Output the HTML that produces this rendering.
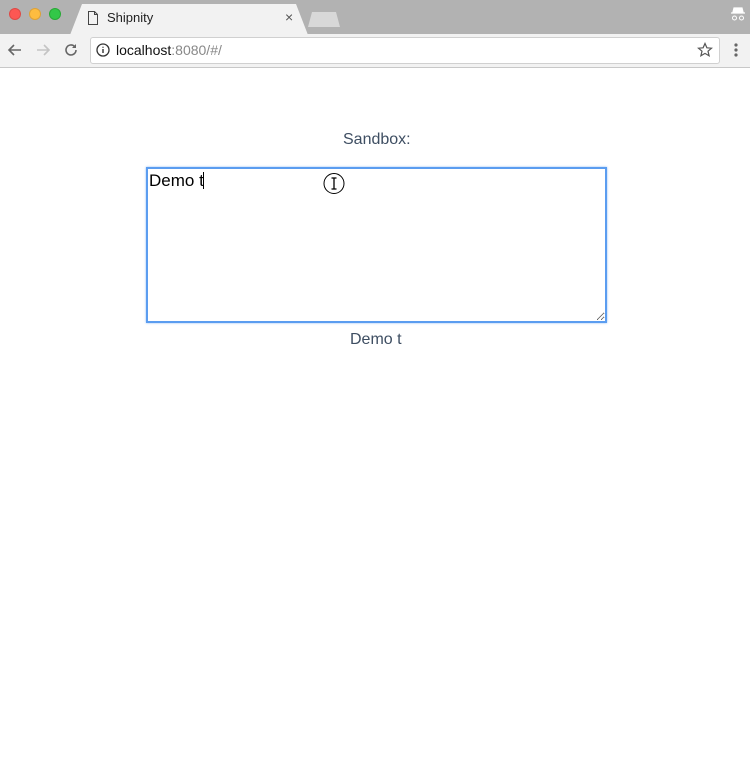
<!DOCTYPE html>
<html><head><meta charset="utf-8"><style>
*{margin:0;padding:0;box-sizing:border-box}
body{width:750px;height:771px;background:#fff;font-family:"Liberation Sans",sans-serif;position:relative;overflow:hidden}
.top{position:absolute;left:0;top:0;width:750px;height:35px;background:#b2b2b2}
.dot{position:absolute;top:8px;width:12px;height:12px;border-radius:50%}
.tab{position:absolute;left:70px;top:4px;width:238px;height:31px;background:#f2f2f2;clip-path:polygon(12px 0,226px 0,238px 31px,0 31px);}
.tab2{position:absolute;left:308px;top:12px;width:32px;height:15px;background:#d8d8d8;clip-path:polygon(4px 0,28px 0,32px 15px,0 15px)}
.bar{position:absolute;left:0;top:34px;width:750px;height:34px;background:#f2f2f2;border-bottom:1px solid #c8c8c8}
.omni{position:absolute;left:90px;top:37px;width:630px;height:27px;background:#fff;border:1px solid #d0d0d0;border-radius:3px}
.t{position:absolute;white-space:nowrap}
textarea{position:absolute;left:146px;top:167px;width:461px;height:156px;border:2px solid #5b9df0;box-shadow:0 0 2px #8ab8f5;font-family:"Liberation Sans",sans-serif;font-size:17px;padding:2px 1px;resize:both;outline:none;caret-color:transparent}
</style></head><body>
<div class="top"></div>
<div class="dot" style="left:9px;background:#fc5753;border:1px solid #de4a46"></div>
<div class="dot" style="left:29px;background:#fdbc40;border:1px solid #dea236"></div>
<div class="dot" style="left:49px;background:#33c748;border:1px solid #27aa35"></div>
<div class="tab"></div>
<div class="tab2"></div>
<svg class="t" style="left:87px;top:11px" width="12" height="14" viewBox="0 0 12 14"><path d="M1.5 .5h6l3 3v10h-9z M7.5 .5v3h3" fill="none" stroke="#444"/></svg>
<div class="t" style="left:107px;top:10px;font-size:13px;color:#222">Shipnity</div>
<div class="t" style="left:285px;top:9px;font-size:14px;color:#555">×</div>
<svg class="t" style="left:729px;top:5px" width="18" height="18" viewBox="0 0 18 18"><path d="M5 3h8l1 4H4z M2 8h14" stroke="#fff" fill="#fff" stroke-width="1.2"/><circle cx="5.5" cy="13" r="2" fill="none" stroke="#fff"/><circle cx="12.5" cy="13" r="2" fill="none" stroke="#fff"/></svg>
<div class="bar"></div>
<svg class="t" style="left:6px;top:42px" width="18" height="16" viewBox="0 0 18 16"><path d="M15 8H3M8 3L3 8l5 5" fill="none" stroke="#666" stroke-width="1.6"/></svg>
<svg class="t" style="left:34px;top:42px" width="18" height="16" viewBox="0 0 18 16"><path d="M3 8h12M10 3l5 5-5 5" fill="none" stroke="#c4c4c4" stroke-width="1.6"/></svg>
<svg class="t" style="left:62px;top:41px" width="18" height="18" viewBox="0 0 18 18"><path d="M14 9a5 5 0 1 1-1.5-3.6" fill="none" stroke="#666" stroke-width="1.6"/><path d="M14 3v4h-4z" fill="#666"/></svg>
<div class="omni"></div>
<svg class="t" style="left:96px;top:43px" width="14" height="14" viewBox="0 0 14 14"><circle cx="7" cy="7" r="6" fill="none" stroke="#333" stroke-width="1.3"/><path d="M7 6v4M7 3.8v1" stroke="#333" stroke-width="1.4"/></svg>
<div class="t" style="left:116px;top:42px;font-size:14px;color:#111">localhost<span style="color:#888">:8080/#/</span></div>
<svg class="t" style="left:697px;top:42px" width="16" height="16" viewBox="0 0 16 16"><path d="M8 1.5l1.9 4.3 4.6.4-3.5 3 1.1 4.6L8 11.4l-4.1 2.4 1.1-4.6-3.5-3 4.6-.4z" fill="none" stroke="#555" stroke-width="1.2"/></svg>
<svg class="t" style="left:734px;top:42px" width="4" height="16" viewBox="0 0 4 16"><circle cx="2" cy="3" r="1.6" fill="#666"/><circle cx="2" cy="8" r="1.6" fill="#666"/><circle cx="2" cy="13" r="1.6" fill="#666"/></svg>
<div class="t" style="left:343px;top:131px;font-size:16px;color:#3e4e62">Sandbox:</div>
<textarea>Demo t</textarea>
<div class="t" style="left:203px;top:172px;width:1px;height:17px;background:#000"></div>
<svg class="t" style="left:323px;top:173px" width="22" height="22" viewBox="0 0 22 22"><circle cx="11" cy="10.5" r="10" fill="#fff" stroke="#000"/><path d="M8.5 5h5M11 5v11M8.5 16h5" stroke="#000" stroke-width="1.3"/></svg>
<div class="t" style="left:350px;top:331px;font-size:16px;color:#3e4e62">Demo t</div>
</body></html>
